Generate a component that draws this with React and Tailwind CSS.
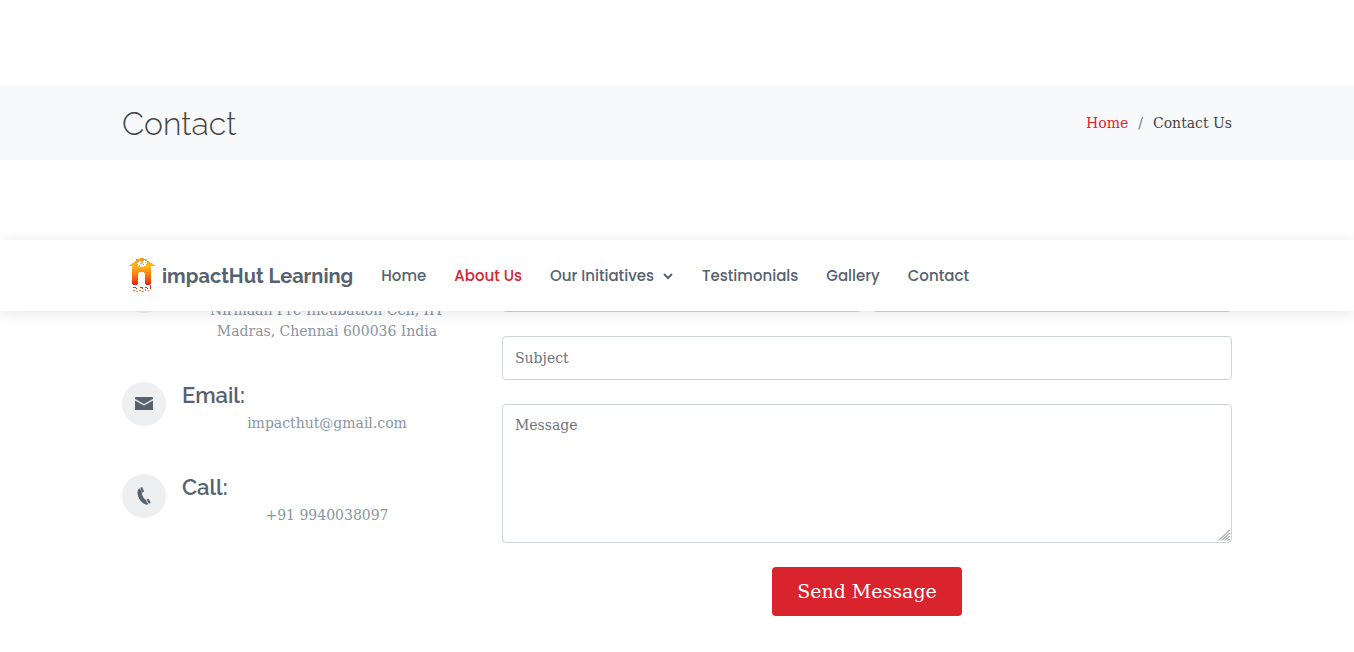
const heading = "font-['Raleway','Lato',sans-serif]";
const navFont = "font-['Poppins','Inter',sans-serif]";

function Logo() {
  return (
    <svg width="40" height="40" viewBox="0 0 40 40" aria-hidden="true" shapeRendering="crispEdges">
      <defs>
        <linearGradient id="hut" x1="0" y1="2" x2="0" y2="30" gradientUnits="userSpaceOnUse">
          <stop offset="0" stopColor="#f0921c" />
          <stop offset="0.3" stopColor="#ffb81c" />
          <stop offset="0.6" stopColor="#ff7a0a" />
          <stop offset="0.85" stopColor="#f0400c" />
          <stop offset="1" stopColor="#d81010" />
        </linearGradient>
      </defs>
      <path
        fill="url(#hut)"
        d="M18 2h4v1h3v2h2v1h1v1h2v1h1v1h2v1h-4v18h-1v1h-4v-1h-1V17h-1v-1h-5v1h-1v11h-1v1h-4v-1h-1V10H7V9h2V8h1V7h2V6h1V5h1V3h4z"
      />
      <path fill="#fff" d="M16 6h1V5h2v1h1v1h1V5h1V4h1v1h2v3h-1v2h-2v1h-4v-1h-2V8h-1z" />
      <path fill="#ff9b1f" d="M18 7h2v1h-2zM21 8h1v1h-1zM17 9h1v1h-1zM23 6h1v1h-1z" />
      <path
        fill="#df2a17"
        d="M11 31h3v1h-3zM14 32h1v1h-1zM18 31h3v1h-3zM20 32h1v1h-1zM23 31h2v1h-2zM28 29h1v4h-1zM25 32h1v1h-1z"
      />
      <path fill="#ff7b22" d="M11 34h2v1h-2zM14 35h2v1h-2zM17 34h2v1h-2zM20 35h2v1h-2zM23 33h1v2h-1zM26 34h1v1h-1z" />
    </svg>
  );
}

function EnvelopeIcon() {
  return (
    <svg width="18" height="14" viewBox="0 0 18 14" fill="currentColor" aria-hidden="true">
      <path d="M1 0h16q1 0 1 1v1L9 7 0 2V1q0-1 1-1z" />
      <path d="M0 3.4 9 8.4l9-5V13H0z" />
    </svg>
  );
}

function PhoneIcon() {
  return (
    <svg width="14" height="18" viewBox="0 0 14 18" fill="currentColor" aria-hidden="true">
      <path d="M2.600 1.200C.7 2.300.2 4.500.6 7c.6 3.800 3.300 8 6.600 9.700l1.900-3.400C6.800 11.800 5 8.800 4.800 5.800L5.400 5.500z" />
      <path d="m3.300.8 1.800-.8 2 4.400-1.900 1.200z" />
      <path d="m9.400 12.600 2-.8 2.400 3.700-1.800 1.200z" />
      <path d="m8.600 12.900 2.700 4.100c-1 .9-2.600.9-4.400-.4z" />
    </svg>
  );
}

function PinIcon() {
  return (
    <svg width="14" height="18" viewBox="0 0 14 18" fill="currentColor" aria-hidden="true">
      <path fillRule="evenodd" d="M7 0a6 6 0 0 0-6 6c0 4 6 12 6 12s6-8 6-12a6 6 0 0 0-6-6zm0 8a2 2 0 1 1 0-4 2 2 0 0 1 0 4z" />
    </svg>
  );
}

function ChevronIcon() {
  return (
    <svg width="12" height="12" viewBox="0 0 12 12" fill="none" stroke="currentColor" strokeWidth="2" aria-hidden="true">
      <path d="m2 4 4 4 4-4" />
    </svg>
  );
}

function ResizeGrip() {
  return (
    <svg
      className="pointer-events-none absolute right-0.5 bottom-0.5"
      width="12"
      height="12"
      viewBox="0 0 12 12"
      stroke="#777"
      aria-hidden="true"
    >
      <path stroke="none" fill="#fff" d="M0 0h12v12H0z" />
      <path d="M1 11.500 11.500 1M4 11.500l7.500-7.500M7 11.500 11.500 7M10 11.500l1.500-1.500" />
    </svg>
  );
}

function InfoItem({ icon, title, children }) {
  return (
    <div className="flex gap-4">
      <span className="flex size-11 shrink-0 items-center justify-center rounded-full bg-[#eeeff0] text-[#556270]">
        {icon}
      </span>
      <div className="min-w-0 flex-1">
        {title ? (
          <h4 className={`${heading} mb-[5px] text-[22px] leading-[26px] font-semibold text-[#556270]`}>{title}</h4>
        ) : (
          <div className="h-[31px]" />
        )}
        <p className="text-center text-sm leading-[21px] text-[#8795a4]">{children}</p>
      </div>
    </div>
  );
}

const field =
  "block w-full rounded border border-[#ced4da] bg-white px-3 text-sm text-[#212529] placeholder:text-[#6c757d] placeholder:opacity-100 focus:outline-none focus:border-[#d9232d]";

const links = [
  { label: "Home" },
  { label: "About Us", active: true },
  { label: "Our Initiatives", menu: true },
  { label: "Testimonials" },
  { label: "Gallery" },
  { label: "Contact" },
];

export default function App() {
  return (
    <div className="relative bg-white pt-[86px] font-['DejaVu_Serif',serif] text-[#444444]">
      <header className="absolute inset-x-0 top-60 z-10 bg-white shadow-[0_2px_15px_rgba(0,0,0,0.1)]">
        <div className="mx-auto flex h-[71px] max-w-[1140px] items-center px-[15px]">
          <a href="#home" className={`${heading} flex items-center text-xl font-bold whitespace-nowrap text-[#556270]`}>
            <Logo />
            impactHut Learning
          </a>
          <nav className={`${navFont} ml-7 flex items-center gap-7 pt-px text-[15px] font-medium whitespace-nowrap`}>
            {links.map((l) => (
              <a
                key={l.label}
                href="#nav"
                className={`flex items-center gap-2 ${l.active ? "text-[#d9232d]" : "text-[#556270]"}`}
              >
                {l.label}
                {l.menu && <ChevronIcon />}
              </a>
            ))}
          </nav>
        </div>
      </header>

      <section className="bg-[#f8f9fb]">
        <div className="mx-auto flex h-[74px] max-w-[1140px] items-center justify-between px-[15px]">
          <h1 className={`${heading} pt-0.5 text-[32px] font-light`}>Contact</h1>
          <ol className="flex text-sm">
            <li>
              <a href="#home" className="text-[#d9232d]">Home</a>
            </li>
            <li className="before:px-[10px] before:text-[#6c757d] before:content-['/']">Contact Us</li>
          </ol>
        </div>
      </section>

      <main className="mx-auto grid max-w-[1140px] grid-cols-[350px_minmax(0,1fr)] gap-x-[30px] px-[15px] pt-[108px] pb-9">
        <div className="flex flex-col gap-10 pt-px">
          <InfoItem icon={<PinIcon />}>Nirmaan Pre-Incubation Cell, IIT Madras, Chennai 600036 India</InfoItem>
          <InfoItem icon={<EnvelopeIcon />} title="Email:">impacthut@gmail.com</InfoItem>
          <InfoItem icon={<PhoneIcon />} title="Call:">+91 9940038097</InfoItem>
        </div>
        <form className="flex flex-col gap-6" onSubmit={(e) => e.preventDefault()}>
          <div className="grid grid-cols-2 gap-[10px]">
            <input type="text" aria-label="Your Name" className={`${field} h-11`} />
            <input type="email" aria-label="Your Email" className={`${field} h-11`} />
          </div>
          <input type="text" aria-label="Subject" placeholder="Subject" className={`${field} h-11`} />
          <div className="relative">
            <textarea
              aria-label="Message"
              placeholder="Message"
              className={`${field} h-[139px] resize-y py-[10px] leading-[21px]`}
            />
            <ResizeGrip />
          </div>
          <button type="submit" className="self-center rounded bg-[#d9232d] px-[25px] py-[10px] text-[19px] leading-[29px] text-white">
            Send Message
          </button>
        </form>
      </main>
    </div>
  );
}
